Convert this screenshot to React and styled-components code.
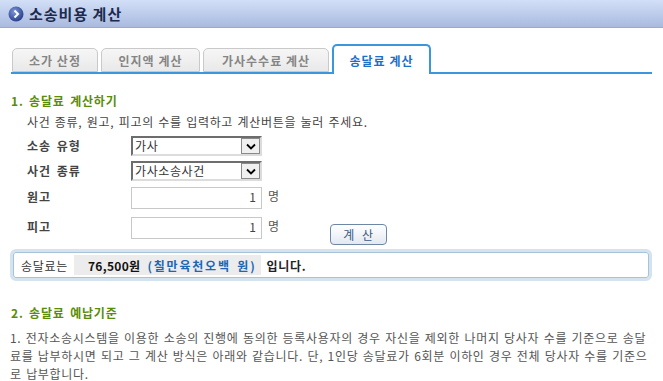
import styled, { createGlobalStyle } from "styled-components";

const GlobalStyle = createGlobalStyle`
  body {
    margin: 0;
    background: #fff;
    font-family: "Noto Sans CJK KR", "Noto Sans", sans-serif;
    font-size: 12px;
    color: #444;
  }
`;

const tabs = ["소가 산정", "인지액 계산", "가사수수료 계산", "송달료 계산"];
const tabWidths = [86, 99, 126, 99];

export default function App() {
  return (
    <StyledPage>
      <GlobalStyle />
      <StyledHeader>
        <svg width="16" height="16" viewBox="0 0 16 16">
          <defs>
            <radialGradient id="ball" cx="40%" cy="35%" r="70%">
              <stop offset="0" stopColor="#7f98d8" />
              <stop offset="1" stopColor="#233a86" />
            </radialGradient>
          </defs>
          <circle cx="8" cy="8" r="7.5" fill="url(#ball)" />
          <path d="M6.5 4.5 L10 8 L6.5 11.5" fill="none" stroke="#fff" strokeWidth="2" />
        </svg>
        <h1>소송비용 계산</h1>
      </StyledHeader>

      <StyledTabs>
        {tabs.map((t, i) => (
          <StyledTab key={t} $active={i === 3} $w={tabWidths[i]}>
            {t}
          </StyledTab>
        ))}
      </StyledTabs>

      <StyledSectionTitle>1. 송달료 계산하기</StyledSectionTitle>
      <StyledDesc>사건 종류, 원고, 피고의 수를 입력하고 계산버튼을 눌러 주세요.</StyledDesc>

      <StyledForm>
        <StyledRow $h={25}>
          <label>소송 유형</label>
          <StyledSelect>
            <span>가사</span>
            <i>
              <svg width="10" height="7" viewBox="0 0 10 7">
                <path d="M1 1.5 L5 5.5 L9 1.5" fill="none" stroke="#000" strokeWidth="1.8" />
              </svg>
            </i>
          </StyledSelect>
        </StyledRow>
        <StyledRow $h={26}>
          <label>사건 종류</label>
          <StyledSelect>
            <span>가사소송사건</span>
            <i>
              <svg width="10" height="7" viewBox="0 0 10 7">
                <path d="M1 1.5 L5 5.5 L9 1.5" fill="none" stroke="#000" strokeWidth="1.8" />
              </svg>
            </i>
          </StyledSelect>
        </StyledRow>
        <StyledRow $h={30}>
          <label>원고</label>
          <StyledInput>1</StyledInput>
          <StyledUnit>명</StyledUnit>
        </StyledRow>
        <StyledRow $h={29}>
          <label>피고</label>
          <StyledInput>1</StyledInput>
          <StyledUnit>명</StyledUnit>
          <StyledButton>계 산</StyledButton>
        </StyledRow>
      </StyledForm>

      <StyledResult>
        <span>송달료는</span>
        <StyledAmount>
          <b>76,500원</b>
          <em>(칠만육천오백 원)</em>
        </StyledAmount>
        <strong>입니다.</strong>
      </StyledResult>

      <StyledSectionTitle $top={24}>2. 송달료 예납기준</StyledSectionTitle>
      <StyledParagraph>
        1. 전자소송시스템을 이용한 소송의 진행에 동의한 등록사용자의 경우 자신을 제외한 나머지 당사자 수를 기준으로 송달료를 납부하시면 되고 그 계산 방식은 아래와 같습니다. 단, 1인당 송달료가 6회분 이하인 경우 전체 당사자 수를 기준으로 납부합니다.
      </StyledParagraph>
    </StyledPage>
  );
}

const StyledPage = styled.div`
  width: 663px;
  height: 381px;
  overflow: hidden;
`;

const StyledHeader = styled.header`
  height: 27px;
  display: flex;
  align-items: center;
  gap: 5px;
  padding-left: 8px;
  background: linear-gradient(#d2dff7, #a9badf);
  border-bottom: 1px solid #9eabc6;
  h1 {
    margin: 0;
    font-size: 15px;
    font-weight: bold;
    color: #1c2a4e;
    letter-spacing: 1px;
  }
`;

const StyledTabs = styled.div`
  margin: 14px 11px 0 11px;
  height: 30px;
  display: flex;
  align-items: flex-end;
  gap: 3px;
  padding-left: 1px;
  border-bottom: 2px solid #3b97dd;
`;

const StyledTab = styled.div`
  width: ${(p) => p.$w}px;
  box-sizing: border-box;
  height: ${(p) => (p.$active ? 30 : 24)}px;
  margin-bottom: ${(p) => (p.$active ? -2 : 0)}px;
  display: flex;
  align-items: center;
  justify-content: center;
  font-size: 12px;
  font-weight: bold;
  border-radius: 5px 5px 0 0;
  border: ${(p) => (p.$active ? "2px solid #3b97dd" : "1px solid #c9c9c9")};
  border-bottom: ${(p) => (p.$active ? "none" : "1px solid #c9c9c9")};
  background: ${(p) => (p.$active ? "#fff" : "linear-gradient(#f6f6f6, #e9e9e9)")};
  color: ${(p) => (p.$active ? "#1a6fc8" : "#858585")};
  letter-spacing: 1px;
`;

const StyledSectionTitle = styled.h2`
  margin: ${(p) => p.$top || 19}px 0 0 11px;
  font-size: 12px;
  font-weight: bold;
  color: #5a8c06;
  line-height: 16px;
  letter-spacing: 0.8px;
  word-spacing: 2px;
`;

const StyledDesc = styled.p`
  margin: 5px 0 0 27px;
  line-height: 16px;
  color: #444;
  letter-spacing: 0.7px;
  word-spacing: 1px;
`;

const StyledForm = styled.div`
  margin: 6px 0 0 27px;
  display: flex;
  flex-direction: column;
`;

const StyledRow = styled.div`
  height: ${(p) => p.$h}px;
  display: flex;
  align-items: flex-start;
  label {
    width: 104px;
    font-weight: bold;
    color: #444;
    line-height: 20px;
    letter-spacing: 1px;
    word-spacing: 2px;
  }
`;

const StyledSelect = styled.div`
  width: 131px;
  height: 20px;
  box-sizing: border-box;
  display: flex;
  align-items: stretch;
  border: 2px solid #6d6d6d;
  border-right-color: #dcdcdc;
  border-bottom-color: #dcdcdc;
  background: #fff;
  span {
    flex: 1;
    line-height: 16px;
    padding-left: 2px;
    color: #333;
    letter-spacing: 0.6px;
  }
  i {
    width: 17px;
    display: flex;
    align-items: center;
    justify-content: center;
    background: #f0f0f0;
    border: 1px solid #8a8a8a;
  }
`;

const StyledInput = styled.div`
  width: 131px;
  height: 22px;
  box-sizing: border-box;
  border: 1px solid #c8c8c8;
  text-align: right;
  padding-right: 5px;
  line-height: 18px;
  color: #444;
`;

const StyledUnit = styled.span`
  margin-left: 6px;
  line-height: 18px;
  color: #555;
`;

const StyledButton = styled.button`
  margin: 7px 0 0 51px;
  width: 57px;
  height: 21px;
  border: 1px solid #6f87a6;
  border-radius: 4px;
  background: linear-gradient(#ffffff, #e3e9f1);
  color: #3a5a86;
  font-family: inherit;
  font-size: 12px;
  padding: 0;
  letter-spacing: 1px;
  word-spacing: 3px;
`;

const StyledResult = styled.div`
  margin: 3px 11px 0 10px;
  height: 32px;
  box-sizing: border-box;
  display: flex;
  align-items: center;
  gap: 6px;
  padding-left: 8px;
  border: 3px solid #d3e3ef;
  border-radius: 6px;
  box-shadow: inset 0 0 0 1px #a8c3d8;
  letter-spacing: 0.7px;
  span {
    color: #333;
  }
  strong {
    color: #222;
  }
`;

const StyledAmount = styled.div`
  height: 20px;
  display: flex;
  align-items: center;
  gap: 7px;
  padding: 0 4px 0 14px;
  background: #ececec;
  b {
    color: #111;
    letter-spacing: 0.3px;
  }
  em {
    font-style: normal;
    font-weight: bold;
    color: #1c66b4;
    letter-spacing: 1.8px;
    word-spacing: 2px;
  }
`;

const StyledParagraph = styled.p`
  margin: 8px 10px 0 10px;
  line-height: 18px;
  color: #555;
  letter-spacing: 0.7px;
  word-spacing: 1px;
`;
